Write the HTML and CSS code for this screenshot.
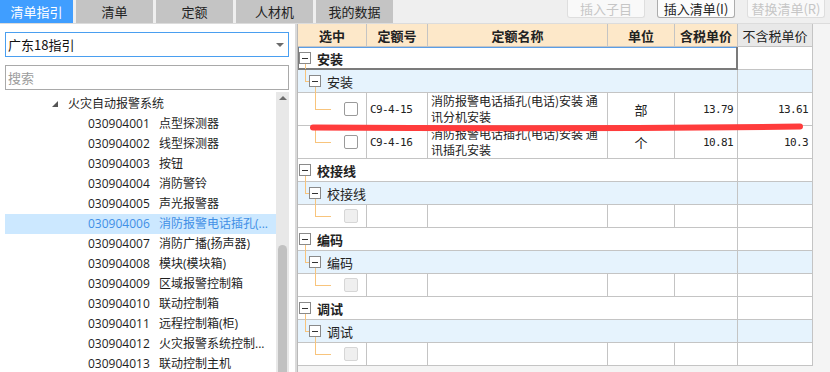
FILE: index.html
```html
<!DOCTYPE html>
<html lang="zh-CN">
<head>
  <meta charset="UTF-8">
  <meta name="viewport" content="width=device-width,initial-scale=1.0">
  <title>清单指引</title>
  <link rel="stylesheet" href="styles.css">
</head>
<body>

<div class="app">
  <header class="topbar">
    <nav class="tabs">
      <a class="tab active">清单指引</a>
      <a class="tab">清单</a>
      <a class="tab">定额</a>
      <a class="tab">人材机</a>
      <a class="tab">我的数据</a>
    </nav>
    <div class="actions">
      <button class="btn" disabled>插入子目</button>
      <button class="btn">插入清单(I)</button>
      <button class="btn" disabled>替换清单(R)</button>
    </div>
  </header>

  <div class="main">
    <!-- left: guide tree -->
    <aside class="guide">
      <div class="select"><span>广东18指引</span><i class="caret"></i></div>
      <div class="search">搜索</div>
      <div class="tree">
        <ul class="tree-list">
          <li class="node"><i class="arrow"></i>火灾自动报警系统</li>
          <li class="leaf"><span class="code">030904001</span>点型探测器</li>
          <li class="leaf"><span class="code">030904002</span>线型探测器</li>
          <li class="leaf"><span class="code">030904003</span>按钮</li>
          <li class="leaf"><span class="code">030904004</span>消防警铃</li>
          <li class="leaf"><span class="code">030904005</span>声光报警器</li>
          <li class="leaf on"><span class="code">030904006</span>消防报警电话插孔(...</li>
          <li class="leaf"><span class="code">030904007</span>消防广播(扬声器)</li>
          <li class="leaf"><span class="code">030904008</span>模块(模块箱)</li>
          <li class="leaf"><span class="code">030904009</span>区域报警控制箱</li>
          <li class="leaf"><span class="code">030904010</span>联动控制箱</li>
          <li class="leaf"><span class="code">030904011</span>远程控制箱(柜)</li>
          <li class="leaf"><span class="code">030904012</span>火灾报警系统控制...</li>
          <li class="leaf"><span class="code">030904013</span>联动控制主机</li>
        </ul>
        <div class="vscroll"><i class="up"></i><span class="thumb"></span></div>
      </div>
    </aside>

    <div class="splitter"></div>

    <!-- right: quota grid -->
    <section class="quota">
      <table class="grid">
        <colgroup>
          <col style="width:69px"><col style="width:61px"><col style="width:180px">
          <col style="width:67px"><col style="width:63px"><col style="width:75px">
        </colgroup>
        <thead>
          <tr><th>选中</th><th>定额号</th><th>定额名称</th><th>单位</th><th>含税单价</th><th class="plain">不含税单价</th></tr>
        </thead>
        <tbody>
          <tr class="g1 focus"><td colspan="5"><div class="lv lv1"><span class="tog"></span><b>安装</b></div></td><td></td></tr>
          <tr class="g2"><td colspan="5"><div class="lv lv2"><span class="tog"></span>安装</div></td><td></td></tr>
          <tr class="item tall">
            <td><div class="lv lv3"><span class="chk"></span></div></td>
            <td class="code">C9-4-15</td>
            <td class="name">消防报警电话插孔(电话)安装 通<br>讯分机安装</td>
            <td class="unit">部</td><td class="num">13.79</td><td class="num">13.61</td>
          </tr>
          <tr class="item tall">
            <td><div class="lv lv3"><span class="chk"></span></div></td>
            <td class="code">C9-4-16</td>
            <td class="name">消防报警电话插孔(电话)安装 通<br>讯插孔安装</td>
            <td class="unit">个</td><td class="num">10.81</td><td class="num">10.3</td>
          </tr>

          <tr class="g1"><td colspan="5"><div class="lv lv1"><span class="tog"></span><b>校接线</b></div></td><td></td></tr>
          <tr class="g2"><td colspan="5"><div class="lv lv2"><span class="tog"></span>校接线</div></td><td></td></tr>
          <tr class="item"><td><div class="lv lv3"><span class="chk off"></span></div></td><td></td><td></td><td></td><td></td><td></td></tr>

          <tr class="g1"><td colspan="5"><div class="lv lv1"><span class="tog"></span><b>编码</b></div></td><td></td></tr>
          <tr class="g2"><td colspan="5"><div class="lv lv2"><span class="tog"></span>编码</div></td><td></td></tr>
          <tr class="item"><td><div class="lv lv3"><span class="chk off"></span></div></td><td></td><td></td><td></td><td></td><td></td></tr>

          <tr class="g1"><td colspan="5"><div class="lv lv1"><span class="tog"></span><b>调试</b></div></td><td></td></tr>
          <tr class="g2"><td colspan="5"><div class="lv lv2"><span class="tog"></span>调试</div></td><td></td></tr>
          <tr class="item"><td><div class="lv lv3"><span class="chk off"></span></div></td><td></td><td></td><td></td><td></td><td></td></tr>
        </tbody>
      </table>
    </section>
  </div>

  <!-- hand-drawn red mark over the grid -->
  <svg class="mark" width="830" height="372" viewBox="0 0 830 372">
    <path d="M313 127.5 Q560 129.5 800 126.5" fill="none" stroke="#ff3c3c" stroke-width="6" stroke-linecap="round"/>
  </svg>
</div>

</body>
</html>
```

FILE: styles.css
```css
:root{
  --blue:#409eff;
  --line:#c4c4c4;
  --tree:#f8c47c;
}
*{box-sizing:border-box;margin:0;padding:0}
html,body{width:830px;height:372px;overflow:hidden}
body{
  font-family:"Noto Sans CJK SC","Noto Sans",sans-serif;
  font-size:13px;
  color:#222;
  background:#fff;
}
.app{position:relative;height:100%;display:flex;flex-direction:column}

/* top bar */
.topbar{
  height:24px;
  flex:none;
  display:flex;
  justify-content:space-between;
  background:#efefef;
  border-bottom:1px solid #dcdcdc;
}
.tabs{display:flex;gap:3px;height:23px}
.tab{
  width:77px;
  line-height:23px;
  text-align:center;
  background:#c4c4c4;
  color:#222;
  font-size:13px;
}
.tab.active{width:73px;background:var(--blue);color:#fff}
.actions{display:flex;gap:12px;padding-right:5px}
.btn{
  width:78px;height:18px;
  font:13px/16px "Noto Sans CJK SC",sans-serif;
  color:#222;
  background:#fcfcfc;
  border:1px solid #acacac;
  border-top:none;
  border-radius:0 0 3px 3px;
}
.btn:disabled{color:#c6c6c6;border-color:#dedede;background:#f9f9f9}

/* layout */
.main{flex:1;display:flex;min-height:0}

/* guide (left) */
.guide{
  width:290px;
  flex:none;
  padding:8px 1px 0 5px;
  display:flex;
  flex-direction:column;
  background:#fff;
}
.select{
  height:25px;
  border:1px solid #4a9ff0;
  padding:0 4px 0 2px;
  display:flex;
  justify-content:space-between;
  align-items:center;
  color:#111;
}
.caret{border:4px solid transparent;border-top-color:#6a6a6a;border-bottom:0;margin-top:1px}
.search{
  margin-top:8px;
  height:25px;
  border:1px solid #a9a9a9;
  padding-left:2px;
  line-height:23px;
  color:#9c9c9c;
}
.tree{flex:1;margin-top:2px;display:flex;min-height:0}
.tree-list{
  flex:1;
  list-style:none;
  padding-top:2px;
  font-family:"Open Sans","Noto Sans CJK SC",sans-serif;
  font-size:12px;
  color:#1e1e1e;
}
.tree-list li{height:20px;line-height:20px;white-space:nowrap;overflow:hidden}
.node{padding-left:47px}
.arrow{
  display:inline-block;
  width:0;height:0;
  border-style:solid;
  border-width:0 0 6px 6px;
  border-color:transparent transparent #555 transparent;
  margin-right:10px;
  vertical-align:1px;
}
.leaf{padding-left:83px}
.leaf .code{display:inline-block;width:71px}
.leaf.on{background:#cce8ff;color:#3f8fe6}
.vscroll{width:13px;flex:none;background:#e8e8e8;display:flex;flex-direction:column;align-items:center}
.up{margin-top:4px;border:4px solid transparent;border-bottom:4px solid #6d6d6d;border-top:0;width:0}
.thumb{margin-top:145px;flex:1;width:9px;background:#c1c1c1;border-radius:5px 5px 0 0}

.splitter{width:7px;flex:none;background:#fff;border-right:2px solid #dadada}

/* quota grid (right) */
.quota{flex:1;background:#f4f4f4;border-left:1px solid #b9b9b9;overflow:hidden}
.grid{
  width:515px;
  table-layout:fixed;
  border-collapse:separate;
  border-spacing:0;
  background:#fff;
}
.grid th,.grid td{
  height:23px;
  padding:0;
  border-right:1px solid var(--line);
  border-bottom:1px solid var(--line);
  vertical-align:middle;
}
.grid th{background:#fde8c9;font-weight:700;font-size:13px;text-align:center}
.grid th.plain{background:#e8e8e8;font-weight:400}
.grid tr.tall td{height:33px}
.g2 td{background:#e6f3fd}

.focus td:first-child{
  border-right-color:#7b7b7b;
  border-bottom-color:#7b7b7b;
  box-shadow:inset 1px 0 #7b7b7b,inset -1px 0 #7b7b7b,inset 0 -1px #7b7b7b,inset 0 1px #5b9ee6;
}

/* tree cells */
.lv{position:relative;height:22px;display:flex;align-items:center;gap:6px}
.tall .lv{height:32px}
.lv1{padding-left:1px}
.lv1 b{font-size:13px}
.lv2{padding-left:11px}
.tog{position:relative;width:12px;height:12px;flex:none;border:1px solid #8a8a8a;background:#fff}
.tog::after{content:"";position:absolute;left:2px;right:2px;top:5px;height:1px;background:#333}
.lv1::after,.lv2::after{content:"";position:absolute;top:17px;bottom:-1px;width:1px;background:var(--tree)}
.lv1::after{left:7px}
.lv2::after{left:17px}
.focus .lv1::after{bottom:0}
.lv2::before,.lv3::before{
  content:"";position:absolute;top:0;height:50%;
  border-left:1px solid var(--tree);
  border-bottom:1px solid var(--tree);
}
.lv2::before{left:7px;width:4px}
.lv3::before{left:17px;width:15px}
.lv3{padding-left:46px}
.chk{width:14px;height:14px;border:1px solid #9a9a9a;border-radius:2px;background:#fff}
.chk.off{background:#efefef;border-color:#d6d6d6}

.grid td.code,.grid td.num{
  font-family:"DejaVu Sans Mono",monospace;
  font-size:11px;
  letter-spacing:-.6px;
}
.grid td.code{padding-left:3px}
.grid td.num{text-align:right;padding-right:4px}
.grid td.name{font-size:12px;line-height:16px;padding-left:3px;white-space:nowrap}
.grid td.unit{text-align:center}

.mark{position:absolute;left:0;top:0;pointer-events:none}
```
